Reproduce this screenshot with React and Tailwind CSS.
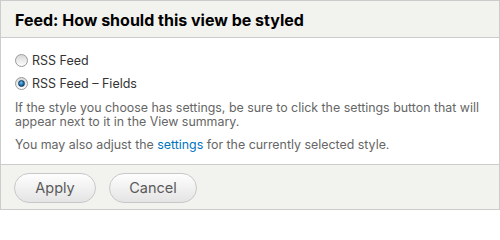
import { useState } from "react";

const styles = [
  { id: "rss", label: "RSS Feed" },
  { id: "rss_fields", label: "RSS Feed – Fields" },
];

function Radio({ checked }) {
  return (
    <span className="relative inline-block w-[13px] h-[13px] rounded-full border border-[#9a9a9a] bg-gradient-to-b from-[#d8d8d8] to-[#fdfdfd] shrink-0">
      {checked && (
        <span className="absolute left-[2px] top-[2px] w-[7px] h-[7px] rounded-full bg-[radial-gradient(circle_at_40%_35%,#6cc0f0,#0b5c93_70%)] border border-[#0d3d63]" />
      )}
    </span>
  );
}

export default function App() {
  const [style, setStyle] = useState("rss_fields");

  return (
    <div className="w-[500px] h-[210px] bg-white font-['Inter',sans-serif] border border-[#cccccc] flex flex-col">
      <div className="h-[37px] bg-[#f2f2ee] border-b border-[#cccccc] px-[14px] flex items-center">
        <h2 className="text-[16px] font-bold text-[#000] leading-none pt-[2px]">
          Feed: How should this view be styled
        </h2>
      </div>

      <div className="flex-1 px-[14px] pt-[15px]">
        <div className="flex flex-col gap-[8px]">
          {styles.map((s) => (
            <label
              key={s.id}
              className="flex items-center gap-[4px] text-[12.5px] text-[#333] leading-[15px] cursor-pointer"
              onClick={() => setStyle(s.id)}
            >
              <Radio checked={style === s.id} />
              <span>{s.label}</span>
            </label>
          ))}
        </div>
        <p className="mt-[10px] text-[12.4px] leading-[14px] text-[#666]">
          If the style you choose has settings, be sure to click the settings button that will
          appear next to it in the View summary.
        </p>
        <p className="mt-[9px] text-[12.4px] leading-[14px] text-[#666]">
          You may also adjust the <a className="text-[#0074bd]">settings</a> for the currently
          selected style.
        </p>
      </div>

      <div className="h-[45px] bg-[#f2f2ee] border-t border-[#cccccc] px-[13px] flex items-start pt-[8px] gap-[13px]">
        <button className="w-[82px] h-[30px] rounded-full border border-[#c8c8c8] bg-gradient-to-b from-[#fefefe] to-[#e4e4e4] text-[14.5px] text-[#5a5a5a]">
          Apply
        </button>
        <button className="w-[88px] h-[30px] rounded-full border border-[#c8c8c8] bg-gradient-to-b from-[#fefefe] to-[#e4e4e4] text-[14.5px] text-[#5a5a5a]">
          Cancel
        </button>
      </div>
    </div>
  );
}
